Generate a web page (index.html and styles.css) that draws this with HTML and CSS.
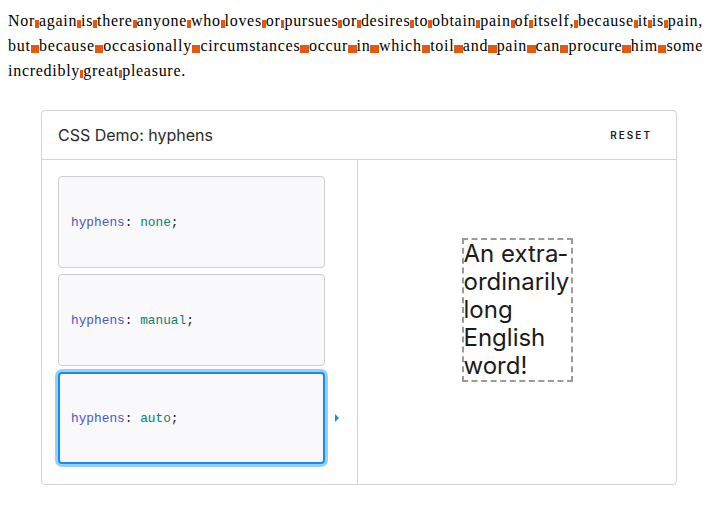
FILE: index.html
```html
<!DOCTYPE html>
<html lang="en">
<head>
<meta charset="utf-8">
<title>CSS Demo: hyphens</title>
<link rel="stylesheet" href="styles.css">
</head>
<body>
<p class="intro">Nor<span class="g"> </span>again<span class="g"> </span>is<span class="g"> </span>there<span class="g"> </span>anyone<span class="g"> </span>who<span class="g"> </span>loves<span class="g"> </span>or<span class="g"> </span>pursues<span class="g"> </span>or<span class="g"> </span>desires<span class="g"> </span>to<span class="g"> </span>obtain<span class="g"> </span>pain<span class="g"> </span>of<span class="g"> </span>itself,<span class="g"> </span>because<span class="g"> </span>it<span class="g"> </span>is<span class="g"> </span>pain,<span class="g"> </span>but<span class="g"> </span>because<span class="g"> </span>occasionally<span class="g"> </span>circumstances<span class="g"> </span>occur<span class="g"> </span>in<span class="g"> </span>which<span class="g"> </span>toil<span class="g"> </span>and<span class="g"> </span>pain<span class="g"> </span>can<span class="g"> </span>procure<span class="g"> </span>him<span class="g"> </span>some<span class="g"> </span>incredibly<span class="g"> </span>great<span class="g"> </span>pleasure.</p>

<section class="demo">
  <header class="demo-head">
    <h2 class="demo-title">CSS Demo: hyphens</h2>
    <button class="reset">RESET</button>
  </header>
  <div class="demo-body">
    <div class="choices">
      <div class="choice"><code><span class="prop">hyphens</span><span class="punc">:</span> <span class="val">none</span><span class="punc">;</span></code></div>
      <div class="choice"><code><span class="prop">hyphens</span><span class="punc">:</span> <span class="val">manual</span><span class="punc">;</span></code></div>
      <div class="choice selected"><code><span class="prop">hyphens</span><span class="punc">:</span> <span class="val">auto</span><span class="punc">;</span></code><span class="marker"></span></div>
    </div>
    <div class="output">
      <div class="sample">An extra&shy;ordinarily long English word!</div>
    </div>
  </div>
</section>
</body>
</html>
```

FILE: styles.css
```css
html, body {
  background: #ffffff;
}

body {
  margin: 8px;
  font-family: "Liberation Serif", "Times New Roman", serif;
  font-size: 16px;
  color: #000;
}

.intro {
  margin: 0;
  padding-right: 9px;
  line-height: 25px;
  letter-spacing: 0.72px;
  text-align: justify;
}

.g {
  font-size: 7px;
  line-height: 0;
  letter-spacing: 1.5px;
  background: #e4580f;
}

.demo {
  box-sizing: border-box;
  width: 636px;
  margin: 27px 0 0 33px;
  border: 1px solid #d4d4d4;
  border-radius: 4px;
  font-family: Inter, "Noto Sans", sans-serif;
}

.demo-head {
  height: 48px;
  display: flex;
  align-items: center;
  justify-content: space-between;
  padding: 0 24px 0 16px;
  border-bottom: 1px solid #d4d4d4;
}

.demo-title {
  margin: 0;
  font-size: 16px;
  font-weight: 400;
  color: #2b2b2b;
}

.reset {
  border: 0;
  background: none;
  padding: 0;
  font-family: Inter, "Noto Sans", sans-serif;
  font-size: 10px;
  font-weight: 600;
  letter-spacing: 2px;
  color: #1b1a24;
}

.demo-body {
  display: grid;
  grid-template-columns: 316px 1fr;
  height: 324px;
}

.choices {
  border-right: 1px solid #d4d4d4;
  padding: 16px 32px 0 16px;
  display: flex;
  flex-direction: column;
  gap: 6px;
}

.choice {
  position: relative;
  box-sizing: border-box;
  height: 92px;
  display: flex;
  align-items: center;
  padding: 0 12px;
  background: #f9f9fb;
  border: 1px solid #cfcfcf;
  border-radius: 4px;
}

.choice code {
  font-family: "Liberation Mono", "DejaVu Sans Mono", monospace;
  font-size: 12.8px;
  color: #1b1b1b;
}

.prop {
  color: #4b56c4;
}

.val {
  color: #08806a;
}

.punc {
  color: #1b1b1b;
}

.choice.selected {
  border: 2px solid #1a89f0;
  padding-left: 11px;
  box-shadow: 0 0 0 3px #93d2f6;
}

.marker {
  position: absolute;
  right: -16px;
  top: 50%;
  margin-top: -4px;
  width: 0;
  height: 0;
  border-top: 4px solid transparent;
  border-bottom: 4px solid transparent;
  border-left: 4px solid #1a89f0;
}

.output {
  display: flex;
  align-items: center;
  justify-content: center;
  padding-bottom: 25px;
}

.sample {
  width: 107px;
  border: 2px dashed #9a9a9a;
  font-size: 24px;
  line-height: 28px;
  color: #1b1b1b;
  hyphens: manual;
}
```
